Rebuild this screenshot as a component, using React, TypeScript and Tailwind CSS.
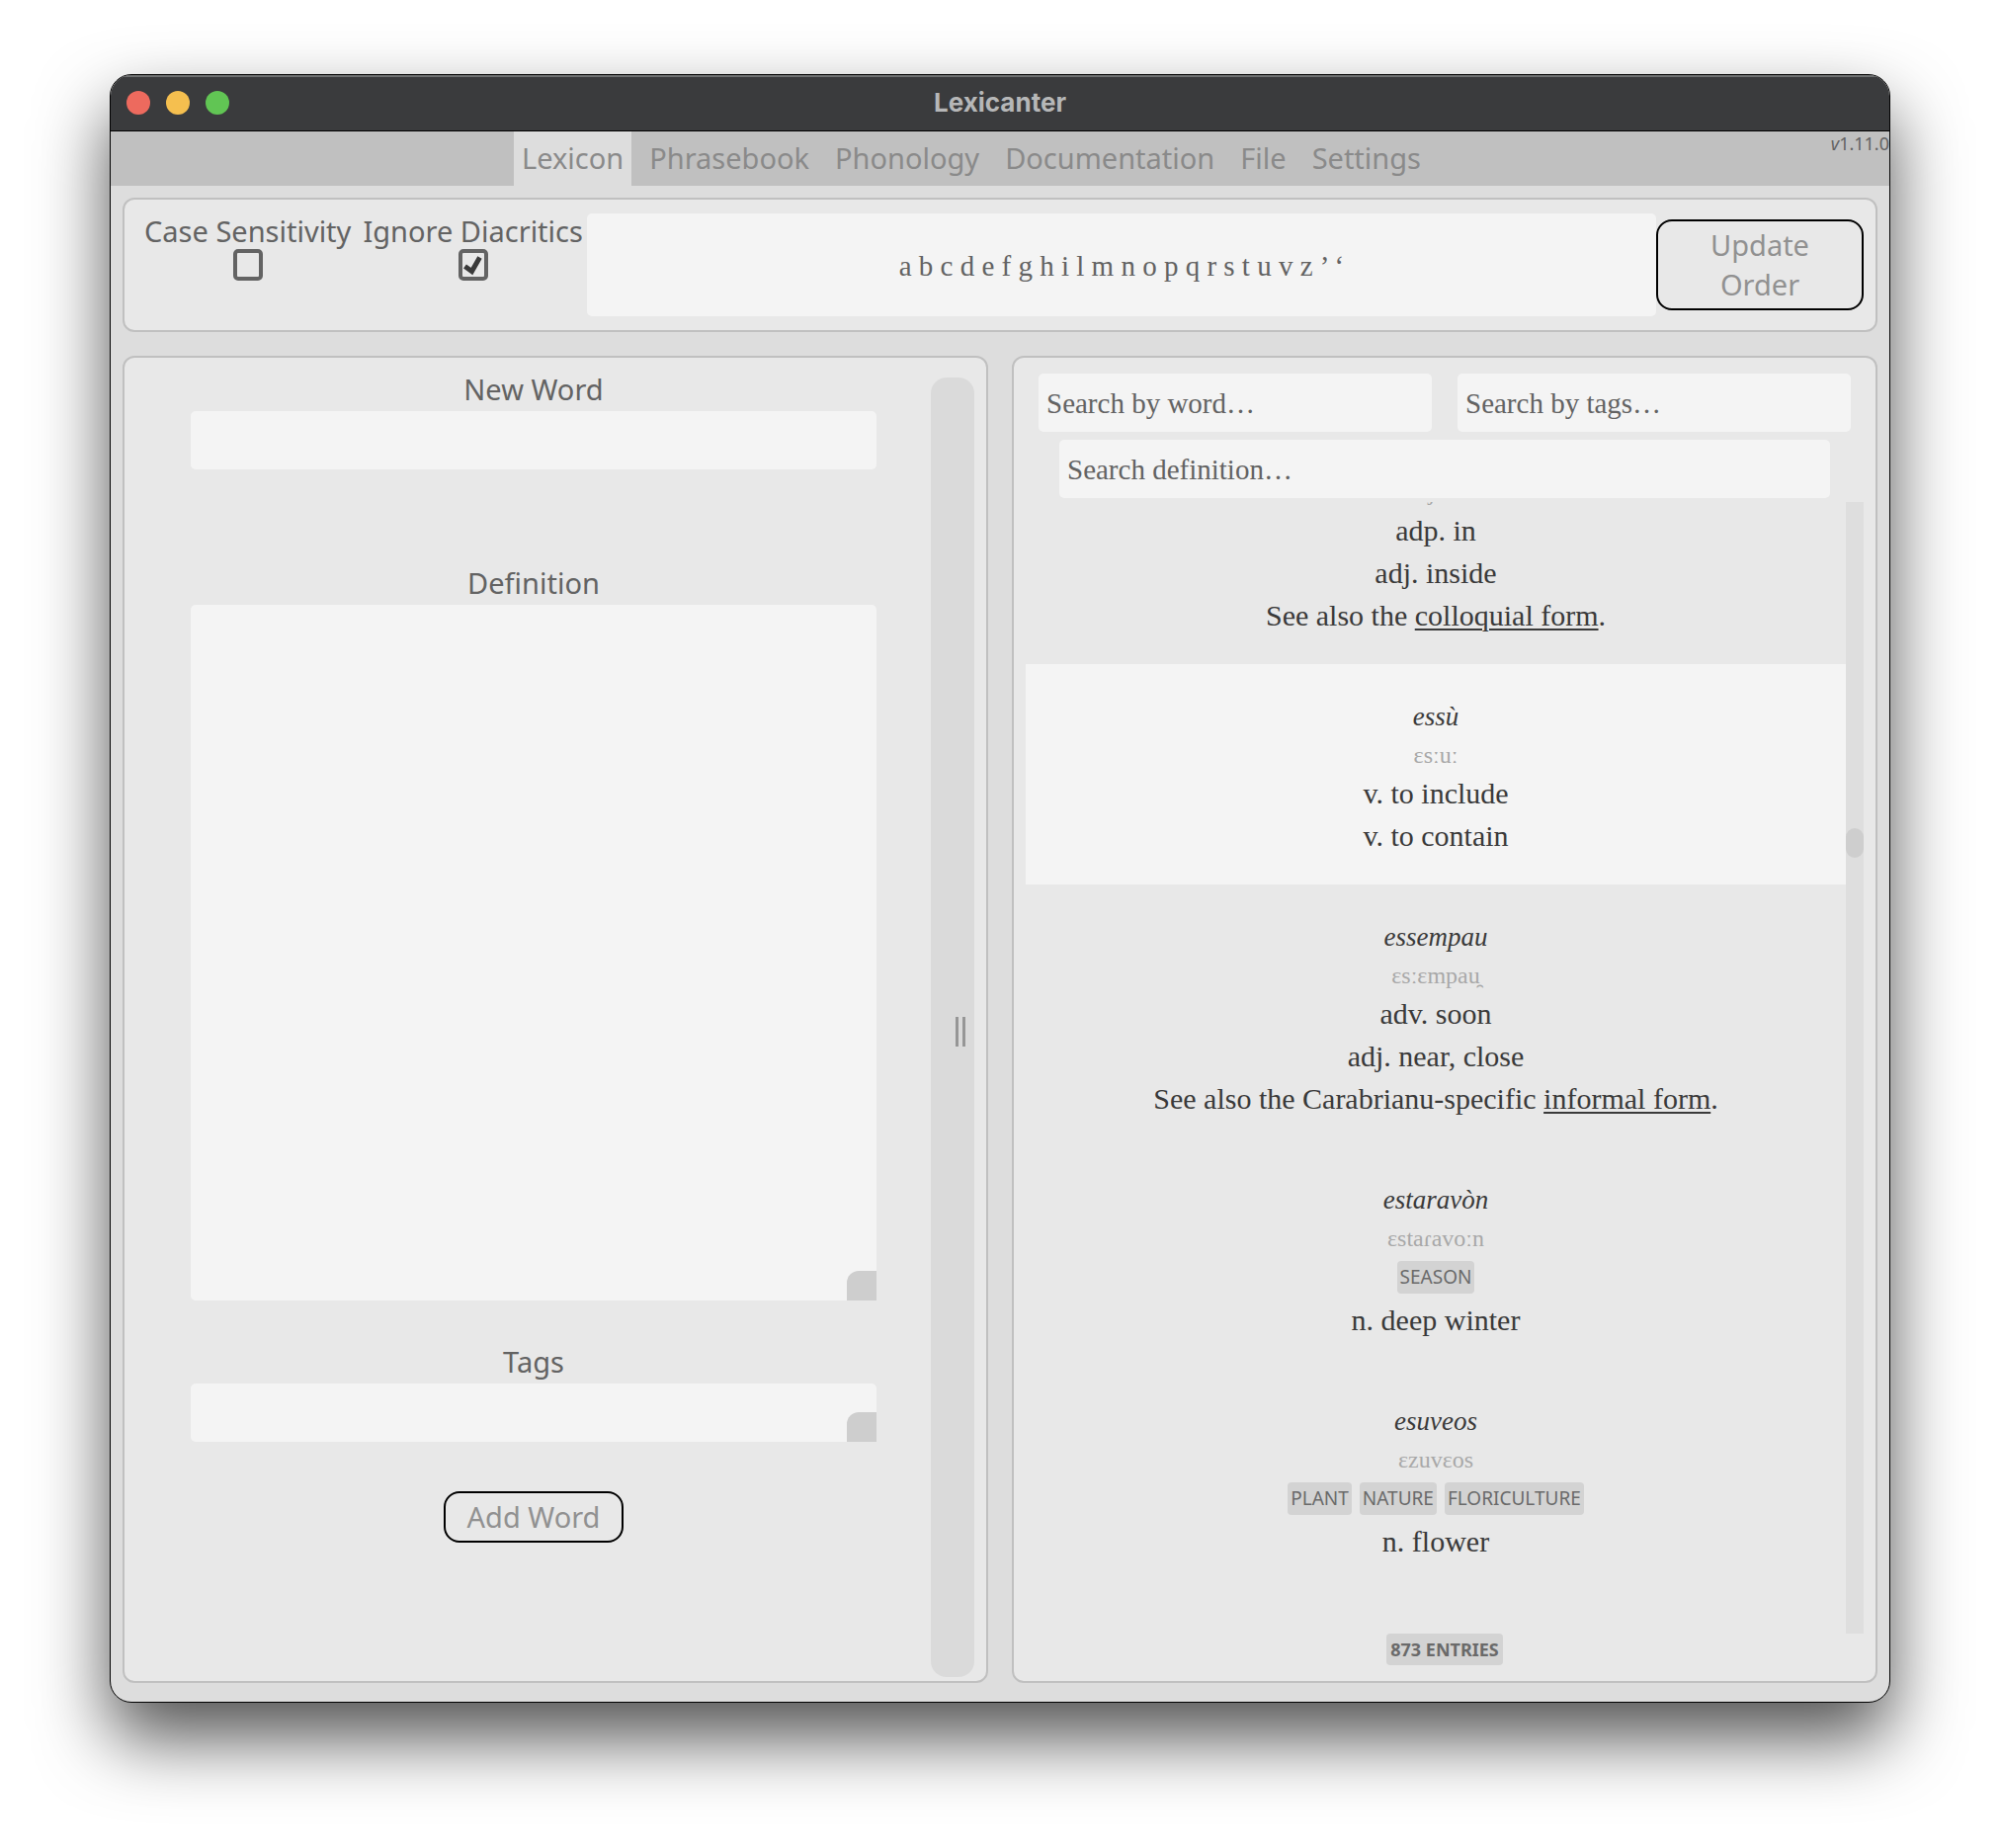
import React from "react";

type Entry = {
  word?: string;
  phon: string;
  tags?: string[];
  lines: React.ReactNode[];
  active?: boolean;
};

function Ref({ children }: { children: React.ReactNode }) {
  return (
    <a href="#" className="underline decoration-2 underline-offset-[3px]">
      {children}
    </a>
  );
}

const entries: Entry[] = [
  {
    phon: "ɛjːu",
    lines: ["adp. in", "adj. inside", <>See also the <Ref>colloquial form</Ref>.</>],
  },
  { word: "essù", phon: "ɛsːuː", lines: ["v. to include", "v. to contain"], active: true },
  {
    word: "essempau",
    phon: "ɛsːɛmpau̯",
    lines: ["adv. soon", "adj. near, close", <>See also the Carabrianu-specific <Ref>informal form</Ref>.</>],
  },
  { word: "estaravòn", phon: "ɛstaɾavoːn", tags: ["SEASON"], lines: ["n. deep winter"] },
  { word: "esuveos", phon: "ɛzuvɛos", tags: ["PLANT", "NATURE", "FLORICULTURE"], lines: ["n. flower"] },
];

const tabs = ["Lexicon", "Phrasebook", "Phonology", "Documentation", "File", "Settings"];

function EntryView({ entry }: { entry: Entry }) {
  return (
    <article
      className={
        "flex shrink-0 flex-col items-center pt-8 pb-7 text-center " + (entry.active ? "bg-[#f4f4f4]" : "")
      }
    >
      {entry.word && <h3 className="text-[27px] leading-[43px] italic">{entry.word}</h3>}
      <p className="text-2xl leading-[34px] text-[#a8a8a8]">{entry.phon}</p>
      {entry.tags && (
        <ul className="flex h-11 items-center gap-2 font-['Noto_Sans',sans-serif]">
          {entry.tags.map((t) => (
            <li key={t} className="rounded-sm bg-[#d3d3d3] px-[3px] text-[19px] leading-[33px] text-[#6a6a6a]">
              {t}
            </li>
          ))}
        </ul>
      )}
      {entry.lines.map((l, i) => (
        <p key={i} className="text-3xl leading-[43px]">
          {l}
        </p>
      ))}
    </article>
  );
}

function Check({ label, checked }: { label: string; checked?: boolean }) {
  return (
    <label className="flex flex-col items-center text-[29px] leading-[40px] whitespace-nowrap text-[#636363]">
      {label}
      <span className="relative -mt-0.5 block h-8 w-[30px]">
        <input
          type="checkbox"
          defaultChecked={checked}
          className="peer block h-8 w-[30px] appearance-none rounded-[5px] border-4 border-[#636363]"
        />
        <svg
          viewBox="0 0 30 32"
          className="pointer-events-none absolute inset-0 hidden h-8 w-[30px] peer-checked:block"
          fill="none"
          stroke="#3a3a3a"
          strokeWidth="5"
        >
          <path d="M6.500 17.500 13.500 22.500 21.500 8.500" />
        </svg>
      </span>
    </label>
  );
}

const field = "block w-full rounded-[5px] bg-[#f4f4f4] px-2 outline-none placeholder:text-[#636363] placeholder:opacity-100";
const search = "h-[59px] pt-0.5 text-[29px] " + field;

function Grip() {
  return <span className="pointer-events-none absolute right-0 bottom-0 h-[30px] w-[30px] rounded-tl-xl bg-[#cecece]" />;
}

export default function App() {
  return (
    <div className="min-h-screen bg-white px-[111px] pt-[75px] pb-[147px] font-['Noto_Sans',sans-serif]">
      <div className="flex flex-col overflow-hidden rounded-[22px] border border-black bg-[#dddddd] shadow-[0_36px_72px_rgba(0,0,0,0.68)]">
        <header className="grid h-[57px] grid-cols-[1fr_auto_1fr] items-center border-t-2 border-b border-t-[#6f7172] border-b-black bg-[#3a3b3d] px-4 pb-0.5">
          <div className="flex gap-4">
            <button aria-label="Close" className="h-6 w-6 rounded-full bg-[#ed6a5e]" />
            <button aria-label="Minimize" className="h-6 w-6 rounded-full bg-[#f5bf4f]" />
            <button aria-label="Zoom" className="h-6 w-6 rounded-full bg-[#61c554]" />
          </div>
          <h1 className="font-['Inter',sans-serif] text-[26px] leading-8 font-bold text-[#b6b7b8]">Lexicanter</h1>
        </header>

        <nav className="relative flex h-[55px] justify-center gap-2.5 bg-[#c0c0c0] pr-[58px]">
          {tabs.map((t, i) => (
            <button
              key={t}
              className={"px-2 pb-0.5 text-[29px] leading-10 text-[#8a8a8a] " + (i === 0 ? "bg-[#dddddd]" : "")}
            >
              {t}
            </button>
          ))}
          <span className="absolute top-0 right-0 text-lg leading-6 text-[#636363]">
            <i>v</i>1.11.0
          </span>
        </nav>

        <main className="flex flex-col gap-6 px-3 pt-3 pb-[19px]">
          <section className="flex h-[136px] items-center rounded-xl border-2 border-[#c0c0c0] bg-[#e8e8e8] pr-3 pl-5">
            <div className="flex gap-3 self-start pt-3 pr-1">
              <Check label="Case Sensitivity" />
              <Check label="Ignore Diacritics" checked />
            </div>
            <div className="min-w-0 flex-1">
              <input
                aria-label="Alphabetical order"
                defaultValue="a b c d e f g h i l m n o p q r s t u v z ’ ‘"
                className={"h-[104px] pt-0.5 text-center font-['Liberation_Serif',serif] text-[29px] text-[#636363] " + field}
              />
            </div>
            <button className="w-[210px] rounded-2xl border-2 border-black px-10 py-1 text-[29px] leading-10 text-[#919191]">
              Update Order
            </button>
          </section>

          <div className="grid grid-cols-2 gap-6">
            <section className="flex rounded-xl border-2 border-[#c0c0c0] bg-[#e8e8e8] pr-3 pb-1">
              <form className="flex flex-1 flex-col items-center pt-3 pr-[55px] pl-[67px] text-[29px] leading-10 text-[#636363]">
                <label htmlFor="word">New Word</label>
                <input id="word" className={"mt-0.5 h-[59px] " + field} />
                <label htmlFor="def" className="mt-[95px]">
                  Definition
                </label>
                <div className="relative mt-0.5 w-full">
                  <textarea id="def" className={"h-[704px] resize-none " + field} />
                  <Grip />
                </div>
                <label htmlFor="tags" className="mt-[42px]">
                  Tags
                </label>
                <div className="relative mt-0.5 w-full">
                  <textarea id="tags" className={"h-[59px] resize-none " + field} />
                  <Grip />
                </div>
                <button type="button" className="mt-[50px] rounded-2xl border-2 border-black px-[22px] py-1 text-[#919191]">
                  Add Word
                </button>
              </form>
              <div className="mt-5 flex w-11 items-center justify-center rounded-2xl bg-[#dadada] pt-2 pl-4">
                <span className="h-[30px] w-2.5 border-x-3 border-[#969696]" />
              </div>
            </section>

            <section className="flex flex-col rounded-xl border-2 border-[#c0c0c0] bg-[#e8e8e8] px-3 py-4 font-['Liberation_Serif',serif] text-[#3a3a3a]">
              <div className="flex gap-[26px] px-[13px]">
                <input aria-label="Search by word" placeholder="Search by word…" className={search} />
                <input aria-label="Search by tags" placeholder="Search by tags…" className={search} />
              </div>
              <div className="mt-2 px-[34px]">
                <input aria-label="Search definition" placeholder="Search definition…" className={search} />
              </div>
              <div className="mt-1 flex h-[1145px]">
                <div className="flex flex-1 flex-col justify-end overflow-hidden pb-11">
                  {entries.map((e) => (
                    <EntryView key={e.phon} entry={e} />
                  ))}
                </div>
                <div className="w-[18px] bg-[#dedede] pt-[330px]">
                  <div className="h-[30px] rounded-full bg-[#cecece]" />
                </div>
              </div>
              <p className="self-center rounded-sm bg-[#d3d3d3] px-1 font-['Noto_Sans',sans-serif] text-lg leading-8 font-bold text-[#6a6a6a]">
                873 ENTRIES
              </p>
            </section>
          </div>
        </main>
      </div>
    </div>
  );
}
